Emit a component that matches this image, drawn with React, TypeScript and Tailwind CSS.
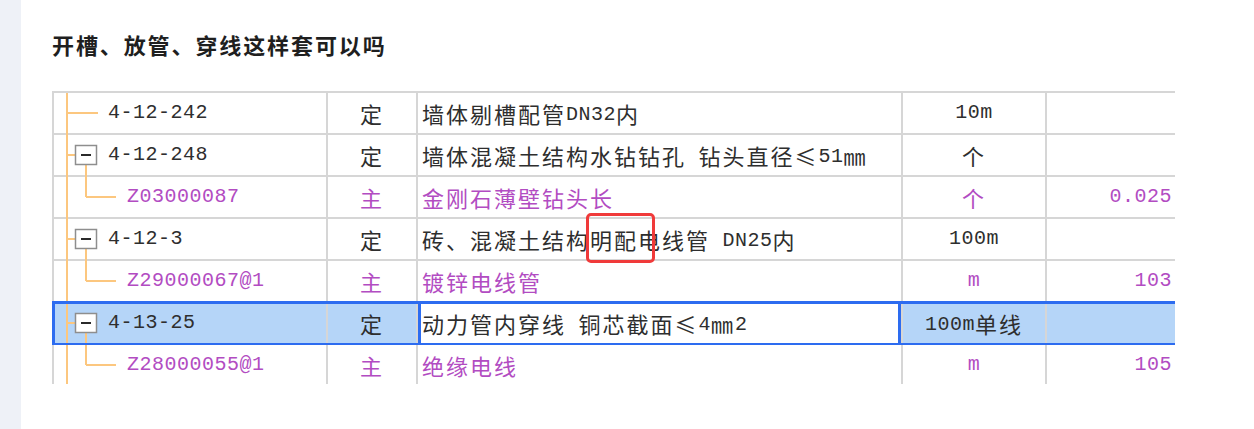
import React from 'react'

type Kind = 'leaf' | 'parent' | 'child'

interface Row {
  code: string
  kind: Kind
  type: string
  name: string
  unit: string
  qty: string
  selected?: boolean
}

const rows: Row[] = [
  { code: '4-12-242', kind: 'leaf', type: '定', name: '墙体剔槽配管DN32内', unit: '10m', qty: '' },
  { code: '4-12-248', kind: 'parent', type: '定', name: '墙体混凝土结构水钻钻孔 钻头直径≤51㎜', unit: '个', qty: '' },
  { code: 'Z03000087', kind: 'child', type: '主', name: '金刚石薄壁钻头长', unit: '个', qty: '0.025' },
  { code: '4-12-3', kind: 'parent', type: '定', name: '砖、混凝土结构明配电线管 DN25内', unit: '100m', qty: '' },
  { code: 'Z29000067@1', kind: 'child', type: '主', name: '镀锌电线管', unit: 'm', qty: '103' },
  { code: '4-13-25', kind: 'parent', type: '定', name: '动力管内穿线 铜芯截面≤4㎜2', unit: '100m单线', qty: '', selected: true },
  { code: 'Z28000055@1', kind: 'child', type: '主', name: '绝缘电线', unit: 'm', qty: '105' },
]

const WIDE = /[\u2264\u3000-\u303f\u3300-\u33ff\u4e00-\u9fff\uff00-\uffef]/

// SimSun-like look: full-width glyphs on a 24px pitch, latin on a 12.5px pitch
function Mixed({ text }: { text: string }) {
  const parts = text.match(/[\u2264\u3000-\u303f\u3300-\u33ff\u4e00-\u9fff\uff00-\uffef]+|[^\u2264\u3000-\u303f\u3300-\u33ff\u4e00-\u9fff\uff00-\uffef]+/g) ?? []
  const mixed = parts.length > 1
  return (
    <>
      {parts.map((p, i) =>
        WIDE.test(p) ? (
          <span key={i} className="font-['Noto_Sans_CJK_SC',sans-serif] text-[22px] tracking-[2px]">
            {p}
          </span>
        ) : (
          <span
            key={i}
            className={`relative font-['Liberation_Mono',monospace] text-[20px] tracking-[0.5px] ${mixed ? 'top-[2px]' : ''}`}
          >
            {p}
          </span>
        )
      )}
    </>
  )
}

function Tree({ kind }: { kind: Kind }) {
  const line = '#fcc77f'
  return (
    <svg className="absolute left-0 top-0 h-[42px] w-[80px]" viewBox="0 0 80 42">
      <line x1="13" y1="0" x2="13" y2="42" stroke={line} strokeWidth="2" />
      {kind === 'leaf' && <line x1="13" y1="20" x2="44" y2="20" stroke={line} strokeWidth="2" />}
      {kind === 'parent' && (
        <>
          <line x1="13" y1="20" x2="21" y2="20" stroke={line} strokeWidth="2" />
          <line x1="32" y1="30" x2="32" y2="42" stroke={line} strokeWidth="2" />
          <rect x="21.5" y="10.5" width="21" height="19" fill="#fff" stroke="#8e8e8e" strokeWidth="1.5" />
          <line x1="27" y1="20" x2="37" y2="20" stroke="#2a2a2a" strokeWidth="2" />
        </>
      )}
      {kind === 'child' && (
        <>
          <line x1="32" y1="0" x2="32" y2="20" stroke={line} strokeWidth="2" />
          <line x1="32" y1="20" x2="62" y2="20" stroke={line} strokeWidth="2" />
        </>
      )}
    </svg>
  )
}

function TableRow({ row }: { row: Row }) {
  const color = row.kind === 'child' ? 'text-[#b24cc2]' : 'text-[#2e2e2e]'
  const bg = row.selected ? 'bg-[#b5d5f8]' : 'bg-white'
  const base = `flex h-[42px] shrink-0 items-center whitespace-pre border-b-2 border-[#d6d6d6] ${color}`
  const cell = `${base} border-r-2`
  return (
    <div className={`relative flex ${bg}`}>
      <div className={`${cell} relative w-[276px] border-l-2 ${row.kind === 'child' ? 'pl-[73px]' : 'pl-[54px]'}`}>
        <Tree kind={row.kind} />
        <span className="relative">
          <Mixed text={row.code} />
        </span>
      </div>
      <div className={`${cell} w-[90px] justify-center`}>
        <Mixed text={row.type} />
      </div>
      <div
        className={`${cell} w-[485px] pl-[4px] ${
          row.selected ? 'bg-white shadow-[inset_3px_0_0_#2d6cf0,inset_-3px_0_0_#2d6cf0]' : ''
        }`}
      >
        <Mixed text={row.name} />
      </div>
      <div className={`${cell} w-[144px] justify-center`}>
        <Mixed text={row.unit} />
      </div>
      <div className={`${base} w-[128px] justify-end pr-[3px]`}>
        <Mixed text={row.qty} />
      </div>
      {row.selected && (
        <div className="pointer-events-none absolute -top-[2px] left-0 h-[45px] w-[1140px] border-[3px] border-[#2d6cf0]" />
      )}
    </div>
  )
}

export default function App() {
  return (
    <div className="flex h-[429px] w-full bg-white">
      <div className="w-[21px] shrink-0 bg-[#eef1f7]" />
      <div className="flex-1 pl-[31px]">
        <h1 className="pt-[28px] font-['Noto_Sans_CJK_SC',sans-serif] text-[22px] font-bold leading-[32px] tracking-[1.9px] text-[#1f1f1f]">
          开槽、放管、穿线这样套可以吗
        </h1>
        <div className="relative mt-[31px] h-[293px] w-[1123px] overflow-hidden border-t-2 border-[#d6d6d6]">
          {rows.map((r) => (
            <TableRow key={r.code} row={r} />
          ))}
          <div className="pointer-events-none absolute left-[534px] top-[120px] h-[50px] w-[69px] rounded-[5px] border-[3px] border-[#f03a3a]" />
        </div>
      </div>
    </div>
  )
}
